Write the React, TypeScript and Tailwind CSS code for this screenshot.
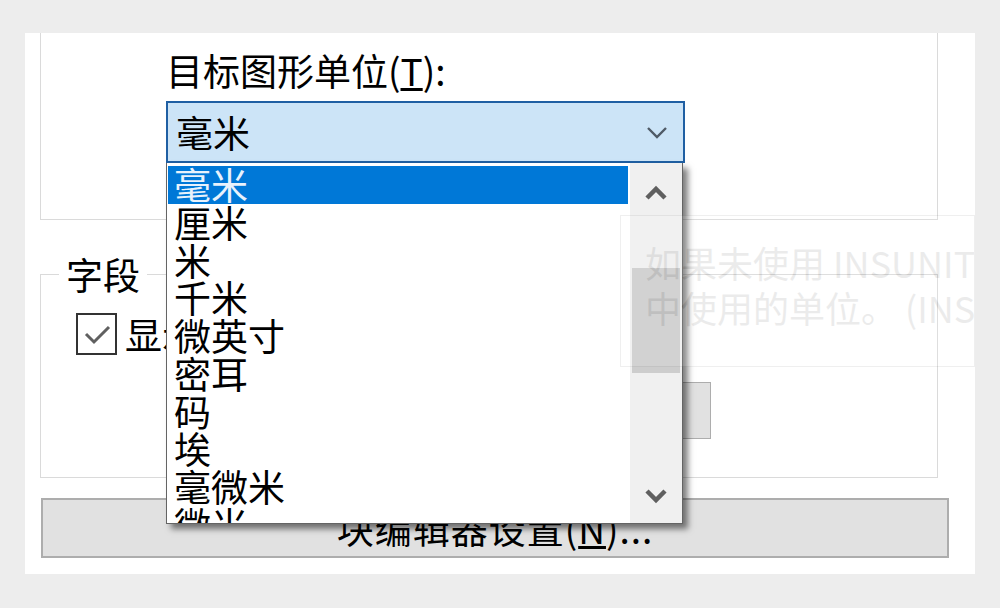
import React from "react";

const units = ["毫米", "厘米", "米", "千米", "微英寸", "密耳", "码", "埃", "毫微米", "微米"];

const font = { fontFamily: '"Noto Sans CJK SC", "Noto Sans", sans-serif' };

const Chevron = ({ up, bold }: { up?: boolean; bold?: boolean }) => (
  <svg width={bold ? 24 : 28} height={bold ? 18 : 16} viewBox="0 0 24 16" fill="none">
    <polyline
      points={up ? "3,13 12,4 21,13" : "3,4 12,13 21,4"}
      stroke={bold ? "#5f5f5f" : "#4f5a66"}
      strokeWidth={bold ? 4.5 : 2.4}
      strokeLinejoin="miter"
    />
  </svg>
);

const UnitDropdown = () => (
  <div className="absolute left-[166px] top-[163px] w-[517px] h-[361px] flex bg-white border-x border-b border-[#646464] shadow-[5px_5px_6px_rgba(0,0,0,0.5)] overflow-hidden">
    <div className="flex-1 pt-[3px] pl-[1px] text-[37px] leading-[37.75px] text-black">
      {units.map((u, i) => (
        <div
          key={u}
          className={i === 0 ? "mr-[2px] pl-[6px] bg-[#0078d7] text-[#e8f2fc]" : "pl-[6px]"}
        >
          {u}
        </div>
      ))}
    </div>
    <div className="w-[52px] bg-[#f0f0f0] flex flex-col">
      <div className="h-[60px] flex items-center justify-center">
        <Chevron up bold />
      </div>
      <div className="flex-1">
        <div className="mt-[45px] mx-[2px] h-[105px] bg-[#cdcdcd]" />
      </div>
      <div className="h-[56px] flex items-center justify-center">
        <Chevron bold />
      </div>
    </div>
  </div>
);

const App = () => {
  return (
    <div className="relative w-[1000px] h-[608px] bg-[#ededed] overflow-hidden pt-[33px] pl-[25px]" style={font}>
      <div className="w-[950px] h-[541px] bg-white pl-[15px] flex flex-col">
        {/* 插入比例 */}
        <div className="w-[898px] h-[187px] border-x border-b border-[#dadada] pl-[125px] pt-[19px]">
          <div className="text-[37px] leading-[37px] text-black whitespace-nowrap">
            目标图形单位(<span className="underline">T</span>):
          </div>
          <div className="mt-[12px] w-[519px] h-[62px] border-2 border-[#1f5fa3] bg-[#cce4f7] flex items-center justify-between pl-[8px] pr-[12px]">
            <span className="text-[37px] leading-[37px] text-black">毫米</span>
            <Chevron />
          </div>
        </div>

        {/* 字段 */}
        <fieldset className="mt-[36px] w-[898px] h-[222px] border border-[#dadada]">
          <legend className="ml-[18px] px-[7px] text-[37px] leading-[37px] text-black">字段</legend>
          <div className="mt-[20px] ml-[35px] flex items-center gap-[8px]">
            <div className="w-[41px] h-[42px] border-2 border-[#333333] bg-white flex items-center justify-center">
              <svg width="30" height="24" viewBox="0 0 30 24" fill="none">
                <polyline points="4,12 12,20 27,5" stroke="#606060" strokeWidth="3" />
              </svg>
            </div>
            <span className="text-[37px] leading-[37px] text-black whitespace-nowrap">显示字段的背景(B)</span>
          </div>
          <button className="mt-[27px] ml-[209px] w-[461px] h-[57px] bg-[#e1e1e1] border border-[#adadad] text-[37px] leading-[37px] text-black">
            字段更新设置(F)...
          </button>
        </fieldset>

        <button className="mt-[20px] ml-[1px] w-[908px] h-[60px] bg-[#e1e1e1] border-2 border-[#adadad] text-[37px] leading-[37px] text-black tracking-[1px]">
          块编辑器设置(<span className="underline">N</span>)...
        </button>
      </div>

      <UnitDropdown />

      {/* 提示 (fading in over the list) */}
      <div className="absolute left-[620px] top-[215px] w-[355px] h-[152px] overflow-hidden opacity-[0.11] bg-white border border-[#767676] pl-[24px] pt-[24px] text-[#575757] text-[36px] leading-[45px] whitespace-nowrap">
        <div>如果未使用 INSUNITS 指定插入单位，则为目标图形</div>
        <div>中使用的单位。 (INSUNITS)</div>
      </div>
    </div>
  );
};

export default App;
